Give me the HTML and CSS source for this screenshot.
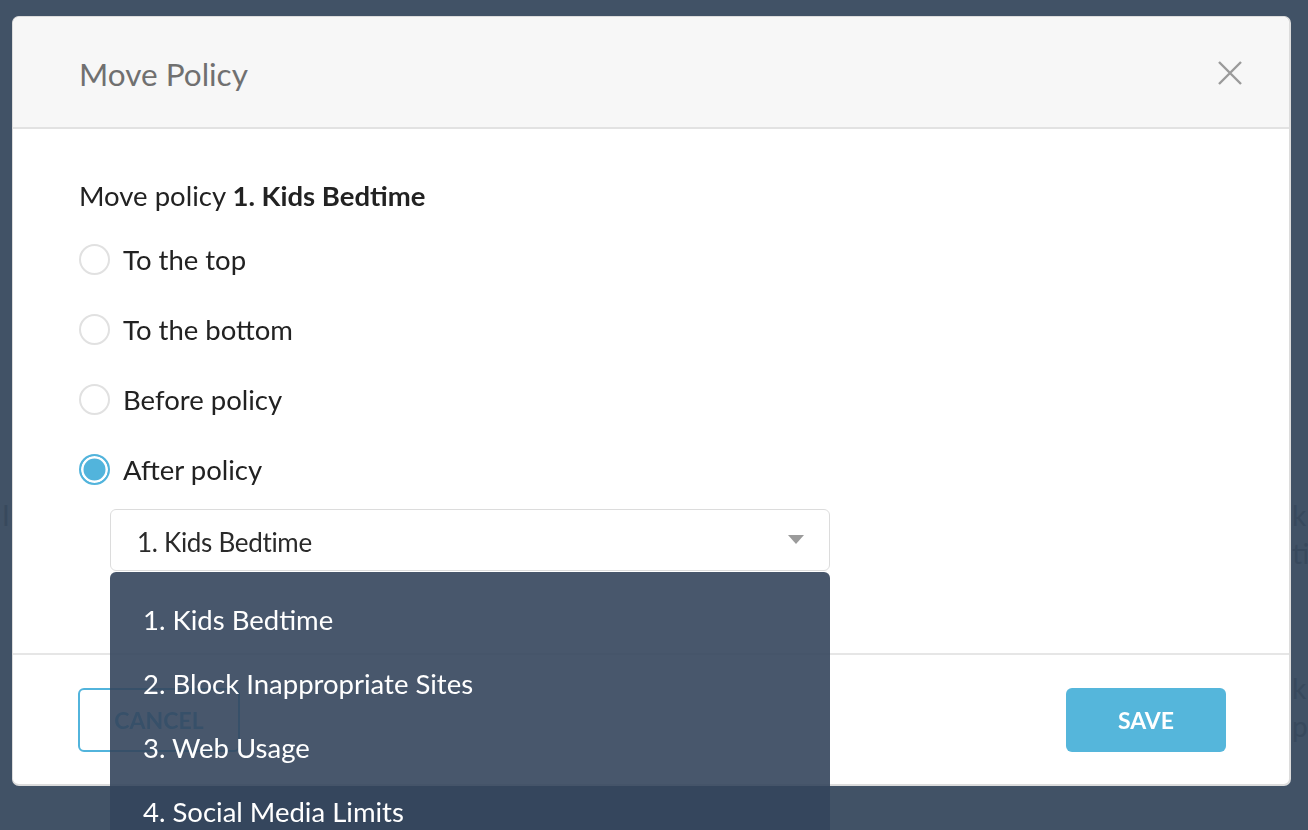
FILE: index.html
```html
<!DOCTYPE html>
<html lang="en">
<head>
<meta charset="utf-8">
<title>Move Policy</title>
<link rel="stylesheet" href="styles.css">
</head>
<body>
<div class="page">
  <div class="page-row page-row-a">
    <span class="page-left">I</span>
    <span class="page-right">k<br>ti</span>
  </div>
  <div class="page-row page-row-b">
    <span class="page-left"></span>
    <span class="page-right">k<br>p</span>
  </div>
</div>

<div class="overlay">
  <div class="modal">
    <div class="modal-header">
      <h2 class="modal-title">Move Policy</h2>
      <button class="close-btn" aria-label="Close">
        <svg width="26" height="26" viewBox="0 0 26 26"><path d="M2 2 L24 24 M24 2 L2 24" stroke="#9a9a9a" stroke-width="2.4" fill="none"/></svg>
      </button>
    </div>
    <div class="modal-body">
      <p class="lead">Move policy <strong>1. Kids Bedtime</strong></p>
      <div class="radio-list">
        <label class="radio-row"><span class="radio"></span><span>To the top</span></label>
        <label class="radio-row"><span class="radio"></span><span>To the bottom</span></label>
        <label class="radio-row"><span class="radio"></span><span>Before policy</span></label>
        <label class="radio-row"><span class="radio checked"></span><span>After policy</span></label>
      </div>
      <div class="select-wrap">
        <div class="select">
          <span class="select-value">1. Kids Bedtime</span>
          <svg class="caret" width="16" height="9" viewBox="0 0 16 9"><path d="M0 0 H16 L8 9 Z" fill="#9b9b9b"/></svg>
        </div>
        <ul class="dropdown">
          <li>1. Kids Bedtime</li>
          <li>2. Block Inappropriate Sites</li>
          <li>3. Web Usage</li>
          <li>4. Social Media Limits</li>
        </ul>
      </div>
    </div>
    <div class="modal-footer">
      <button class="btn btn-outline">CANCEL</button>
      <button class="btn btn-primary">SAVE</button>
    </div>
  </div>
</div>
</body>
</html>
```

FILE: styles.css
```css
* { box-sizing: border-box; }

html, body {
  margin: 0;
  height: 100%;
}

body {
  background: #415266;
  font-family: Lato, "Open Sans", sans-serif;
  overflow: hidden;
}

.page {
  padding-top: 496px;
}

.page-row {
  display: flex;
  justify-content: space-between;
  font-size: 28px;
  line-height: 38px;
  color: #38495d;
}

.page-row-b {
  margin-top: 97px;
}

.page-left {
  margin-left: 2px;
}

.page-right {
  width: 16px;
}

.overlay {
  position: fixed;
  inset: 0;
  padding: 16px 17px 0 12px;
}

.modal {
  background: #fff;
  border: 1px solid #dcdcdc;
  border-right-width: 2px;
  border-bottom-width: 2px;
  border-radius: 7px;
  height: 770px;
  display: flex;
  flex-direction: column;
}

.modal-header {
  height: 112px;
  background: #f7f7f7;
  border-bottom: 2px solid #e2e2e2;
  border-radius: 7px 7px 0 0;
  display: flex;
  align-items: center;
  justify-content: space-between;
  padding: 0 46px 0 66px;
}

.modal-title {
  margin: 0;
  font-weight: 400;
  font-size: 31.5px;
  color: #707070;
  padding-top: 4px;
}

.close-btn {
  border: 0;
  background: none;
  padding: 0;
  display: flex;
  margin-top: 2px;
}

.modal-body {
  flex: 1;
  padding: 50px 66px 0 66px;
  color: #222;
  font-size: 27.5px;
}

.lead {
  margin: 0;
  line-height: 34px;
}

.lead strong {
  font-weight: 700;
}

.radio-list {
  display: flex;
  flex-direction: column;
  margin-top: 11px;
}

.radio-row {
  display: flex;
  align-items: center;
  gap: 13px;
  height: 70px;
}

.radio {
  width: 31px;
  height: 31px;
  border-radius: 50%;
  border: 2px solid #e1e1e1;
  background: #fff;
  flex: none;
}

.radio.checked {
  border-color: #52b4dc;
  box-shadow: inset 0 0 0 2.5px #fff;
  background: #52b4dc;
}

.select-wrap {
  position: relative;
  margin: 5px 0 0 31px;
  width: 720px;
}

.select {
  height: 62px;
  border: 1px solid #dcdcdc;
  border-radius: 6px;
  display: flex;
  align-items: center;
  justify-content: space-between;
  padding: 0 25px 0 26px;
  font-size: 26px;
  letter-spacing: -0.3px;
  color: #2a2a2a;
}

.select-value {
  padding-top: 4px;
}

.caret {
  margin-top: -1px;
}

.dropdown {
  position: absolute;
  left: 0;
  right: 0;
  top: 63px;
  height: 320px;
  margin: 0;
  padding: 15px 0 0 0;
  list-style: none;
  background: rgba(52, 69, 92, 0.9);
  border-radius: 6px 6px 0 0;
  z-index: 5;
}

.dropdown li {
  height: 64px;
  display: flex;
  align-items: center;
  padding-left: 33px;
  font-size: 27.5px;
  color: #fff;
}

.modal-footer {
  border-top: 2px solid #e6e6e6;
  height: 131px;
  display: flex;
  align-items: center;
  justify-content: space-between;
  padding: 0 63px 0 65px;
}

.btn {
  font-family: Lato, "Open Sans", sans-serif;
  font-weight: 700;
  font-size: 23px;
  height: 64px;
  width: 162px;
  border-radius: 6px;
  cursor: pointer;
}

.btn-outline {
  background: #fff;
  border: 2px solid #52b4dc;
  color: #52b4dc;
}

.btn-primary {
  width: 160px;
  background: #55b6db;
  border: 0;
  color: #fff;
}
```
